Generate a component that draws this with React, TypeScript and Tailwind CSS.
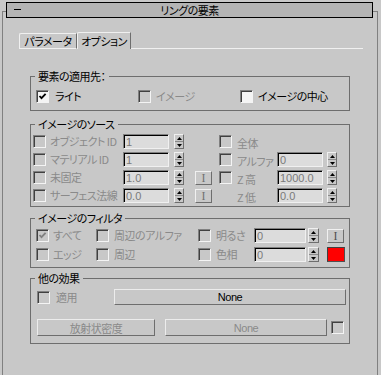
import React from 'react';

const jp = "font-['Noto_Sans_CJK_JP',sans-serif] [font-feature-settings:'palt'] text-[11px] tracking-[-0.5px] whitespace-nowrap";
const lat = "font-['Liberation_Sans',Arial,sans-serif]";

const Check: React.FC<{ checked?: boolean; enabled?: boolean }> = ({ checked, enabled }) => (
  <div
    className={`w-[13px] h-[13px] shrink-0 flex items-center justify-center border border-t-[#808080] border-l-[#808080] border-b-[#f4f4f4] border-r-[#f4f4f4] shadow-[inset_1px_1px_0_#404040] ${
      enabled ? 'bg-[#f4f4f4]' : 'bg-[#c8c8c8]'
    }`}
  >
    {checked && (
      <svg width="9" height="9" viewBox="0 0 9 9">
        <path d="M1.5 4 L3.5 6.2 L7.6 1.8" stroke={enabled ? '#000' : '#808080'} strokeWidth="1.8" fill="none" />
      </svg>
    )}
  </div>
);

const Label: React.FC<{ text: string; enabled?: boolean }> = ({ text, enabled }) => (
  <span className={`${jp} leading-[13px] ${enabled ? 'text-black' : 'text-[#8a8a8a]'}`}>{text}</span>
);

const Field: React.FC<{ value: string; w: string }> = ({ value, w }) => (
  <div
    className={`${w} h-[15px] shrink-0 bg-[#dcdcdc] border border-t-[#808080] border-l-[#808080] border-b-[#f0f0f0] border-r-[#f0f0f0] shadow-[inset_1px_1px_0_#000] pl-[2px] pt-[1px] ${lat} text-[11px] leading-[12px] text-[#7a7a7a]`}
  >
    {value}
  </div>
);

const Spinner: React.FC<{ w: string }> = ({ w }) => (
  <div className={`${w} h-[15px] shrink-0 flex flex-col border border-t-[#f0f0f0] border-l-[#f0f0f0] border-b-[#6e6e6e] border-r-[#6e6e6e]`}>
    <div className="flex-1 flex items-center justify-center border-b border-b-[#8a8a8a]">
      <svg width="5" height="3" viewBox="0 0 5 3">
        <path d="M2.5 0 L5 3 L0 3 Z" fill="#000" />
      </svg>
    </div>
    <div className="flex-1 flex items-center justify-center">
      <svg width="5" height="3" viewBox="0 0 5 3">
        <path d="M0 0 L5 0 L2.5 3 Z" fill="#000" />
      </svg>
    </div>
  </div>
);

const IButton: React.FC<{ dark?: boolean }> = ({ dark }) => (
  <div
    className={`w-[17px] h-[14px] shrink-0 flex items-center justify-center border border-t-[#f0f0f0] border-l-[#f0f0f0] border-b-[#6e6e6e] border-r-[#6e6e6e] font-['Liberation_Serif',serif] text-[12px] leading-[12px] ${
      dark ? 'text-[#505050]' : 'text-[#707070]'
    }`}
  >
    I
  </div>
);

const Button: React.FC<{ text: string; w: string; h: string; enabled?: boolean; latin?: boolean }> = ({ text, w, h, enabled, latin }) => (
  <div
    className={`${w} ${h} shrink-0 flex items-center justify-center border border-t-[#ececec] border-l-[#ececec] border-b-[#6e6e6e] border-r-[#6e6e6e] ${
      latin ? `${lat} text-[11px] tracking-[-0.4px]` : `${jp}`
    } leading-[12px] ${enabled ? 'text-black' : 'text-[#8a8a8a]'}`}
  >
    {text}
  </div>
);

const Group: React.FC<{ title: string; className: string; children: React.ReactNode }> = ({ title, className, children }) => (
  <fieldset className={`w-[320px] ml-[27px] border border-[#6e6e6e] min-w-0 ${className}`}>
    <legend className={`ml-[4px] px-[3px] ${jp} leading-[12px] text-black`}>{title}</legend>
    {children}
  </fieldset>
);

const SourceRow: React.FC<{
  label: string;
  value: string;
  iBtn?: boolean;
  rightCheck?: boolean;
  rightLabel: string;
  rightValue?: string;
}> = ({ label, value, iBtn, rightCheck, rightLabel, rightValue }) => (
  <div className="flex items-center h-[15px] pl-[2px]">
    <div className="w-[90px] flex items-center gap-[4px]">
      <Check />
      <Label text={label} />
    </div>
    <Field value={value} w="w-[46px]" />
    <div className="ml-[5px]">
      <Spinner w="w-[10px]" />
    </div>
    <div className="ml-[11px] w-[17px]">{iBtn && <IButton />}</div>
    <div className="ml-[7px] w-[13px]">{rightCheck && <Check />}</div>
    <div className="ml-[5px] w-[40px]">
      <Label text={rightLabel} />
    </div>
    {rightValue !== undefined && (
      <>
        <Field value={rightValue} w="w-[46px]" />
        <div className="ml-[4px]">
          <Spinner w="w-[10px]" />
        </div>
      </>
    )}
  </div>
);

export default function App() {
  return (
    <div className="w-[381px] h-[375px] bg-[#c8c8c8] overflow-hidden pt-[11px]">
      <div className="ml-[2px] mr-[3px] h-[364px] border-t border-l border-r border-[#808080]">
        {/* rollout title */}
        <div className="-mt-[10px] ml-[3px] w-[367px] h-[16px] bg-[#b4b4b4] border border-black flex items-center relative">
          <div className="absolute left-[7px] top-[6px] w-[7px] h-[1px] bg-black" />
          <div className={`flex-1 text-center ${jp} leading-[14px] text-black`}>リングの要素</div>
        </div>

        {/* tabs */}
        <div className="mt-[14px] ml-[16px] w-[344px] h-[17px] flex items-end">
          <div className={`w-[58px] h-[16px] border-t border-l border-b border-t-[#f0f0f0] border-l-[#f0f0f0] border-b-[#f0f0f0] border-r border-r-[#6e6e6e] rounded-tl-[2px] flex items-center justify-center ${jp} leading-[12px] text-black`}>
            パラメータ
          </div>
          <div className={`w-[54px] h-[17px] border-t border-l border-t-[#f0f0f0] border-l-[#f0f0f0] border-r border-r-[#6e6e6e] rounded-tl-[2px] flex items-center justify-center pb-[1px] ${jp} leading-[12px] text-black`}>
            オプション
          </div>
          <div className="flex-1 border-b border-b-[#f0f0f0]" />
        </div>

        {/* 要素の適用先 */}
        <Group title="要素の適用先：" className="mt-[21px] pb-[7px]">
          <div className="mt-[8px] flex items-center h-[13px] pl-[5px]">
            <div className="w-[102px] flex items-center gap-[6px]">
              <Check checked enabled />
              <Label text="ライト" enabled />
            </div>
            <div className="w-[102px] flex items-center gap-[5px]">
              <Check />
              <Label text="イメージ" />
            </div>
            <div className="flex items-center gap-[5px]">
              <Check enabled />
              <Label text="イメージの中心" enabled />
            </div>
          </div>
        </Group>

        {/* イメージのソース */}
        <Group title="イメージのソース" className="mt-[7px] pt-[4px] pb-[3px]">
          <div className="flex flex-col gap-[3px]">
            <SourceRow label="オブジェクト ID" value="1" rightCheck rightLabel="全体" />
            <SourceRow label="マテリアル ID" value="1" rightCheck rightLabel="アルファ" rightValue="0" />
            <SourceRow label="未固定" value="1.0" iBtn rightCheck rightLabel="Z 高" rightValue="1000.0" />
            <SourceRow label="サーフェス法線" value="0.0" iBtn rightLabel="Z 低" rightValue="0.0" />
          </div>
        </Group>

        {/* イメージのフィルタ */}
        <Group title="イメージのフィルタ" className="mt-[5px] pt-[4px] pb-[5px]">
          <div className="flex flex-col gap-[4px] pl-[5px]">
            <div className="flex items-center h-[15px]">
              <div className="w-[60px] flex items-center gap-[4px]">
                <Check checked />
                <Label text="すべて" />
              </div>
              <div className="w-[102px] flex items-center gap-[5px]">
                <Check />
                <Label text="周辺のアルファ" />
              </div>
              <div className="w-[56px] flex items-center gap-[5px]">
                <Check />
                <Label text="明るさ" />
              </div>
              <Field value="0" w="w-[52px]" />
              <div className="ml-[2px]">
                <Spinner w="w-[11px]" />
              </div>
              <div className="ml-[8px]">
                <IButton dark />
              </div>
            </div>
            <div className="flex items-center h-[15px]">
              <div className="w-[60px] flex items-center gap-[4px]">
                <Check />
                <Label text="エッジ" />
              </div>
              <div className="w-[102px] flex items-center gap-[5px]">
                <Check />
                <Label text="周辺" />
              </div>
              <div className="w-[56px] flex items-center gap-[5px]">
                <Check />
                <Label text="色相" />
              </div>
              <Field value="0" w="w-[52px]" />
              <div className="ml-[2px]">
                <Spinner w="w-[11px]" />
              </div>
              <div className="ml-[8px] w-[18px] h-[15px] bg-[#ff0000] border border-t-[#404040] border-l-[#404040] border-b-[#505050] border-r-[#505050]" />
            </div>
          </div>
        </Group>

        {/* 他の効果 */}
        <Group title="他の効果" className="mt-[4px] pt-[5px] pb-[7px]">
          <div className="flex items-center h-[16px] pl-[6px]">
            <div className="w-[77px] flex items-center gap-[6px]">
              <Check />
              <Label text="適用" />
            </div>
            <Button text="None" w="w-[232px]" h="h-[16px]" enabled latin />
          </div>
          <div className="mt-[14px] flex items-center h-[17px] pl-[6px]">
            <Button text="放射状密度" w="w-[118px]" h="h-[17px]" />
            <div className="ml-[10px]">
              <Button text="None" w="w-[162px]" h="h-[17px]" latin />
            </div>
            <div className="ml-[4px]">
              <Check />
            </div>
          </div>
        </Group>
      </div>
    </div>
  );
}
